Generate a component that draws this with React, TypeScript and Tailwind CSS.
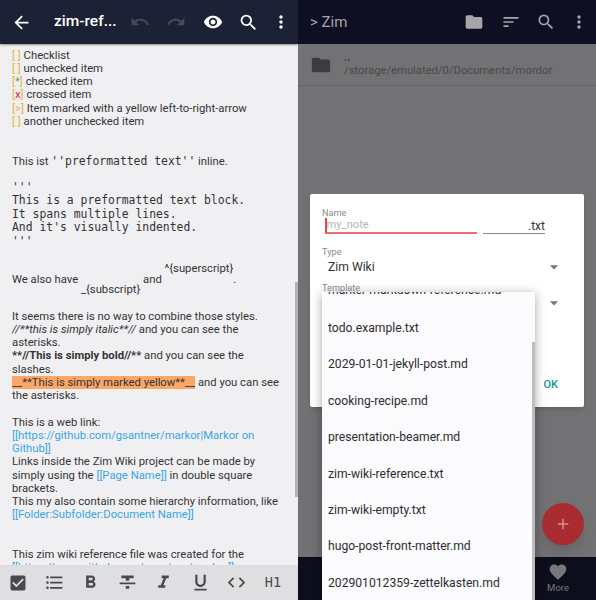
import {
  MdAdd,
  MdArrowBack,
  MdArrowDropDown,
  MdCheckBox,
  MdCode,
  MdFavorite,
  MdFolder,
  MdFormatBold,
  MdFormatItalic,
  MdFormatListBulleted,
  MdFormatStrikethrough,
  MdFormatUnderlined,
  MdMoreVert,
  MdRedo,
  MdSearch,
  MdSort,
  MdUndo,
  MdVisibility,
} from "react-icons/md";

const TEMPLATES = [
  "todo.example.txt",
  "2029-01-01-jekyll-post.md",
  "cooking-recipe.md",
  "presentation-beamer.md",
  "zim-wiki-reference.txt",
  "zim-wiki-empty.txt",
  "hugo-post-front-matter.md",
  "202901012359-zettelkasten.md",
];

const mono = "font-['DejaVu_Sans_Mono',monospace] text-[11.4px]";

function Box({ mark = " ", color = "" }: { mark?: string; color?: string }) {
  return (
    <span className="text-[#e8b23e]">
      [<span className={color}>{mark === " " ? "\u00a0" : mark}</span>]
    </span>
  );
}

function Link({ children }: { children: string }) {
  return <span className="text-[#3aa5e6]">{children}</span>;
}

function Editor() {
  return (
    <div className="flex h-[600px] w-[298px] flex-col bg-[#f0f0f2]">
      <header className="flex h-[44px] shrink-0 items-center bg-[#1d2135] text-white shadow-[0_1px_2px_rgba(0,0,0,0.4)]">
        <MdArrowBack className="ml-[11px] h-[21px] w-[21px]" />
        <span className="ml-[22px] w-[62px] whitespace-nowrap text-[15.5px] font-medium">zim-ref...</span>
        <MdUndo className="ml-[13.5px] h-[20px] w-[20px] text-[#474a5a]" />
        <MdRedo className="ml-[16.5px] h-[20px] w-[20px] text-[#474a5a]" />
        <MdVisibility className="ml-[16.5px] h-[20px] w-[20px]" />
        <MdSearch className="ml-[15.7px] h-[21px] w-[21px]" />
        <MdMoreVert className="ml-[11.8px] h-[20px] w-[20px]" />
      </header>

      <main className="relative min-h-0 flex-1 overflow-hidden pl-3 pr-[16px] pt-[4.5px] text-[11.27px] leading-[13.25px] text-[#333336]">
        <p><Box /> Checklist</p>
        <p><Box /> unchecked item</p>
        <p><Box mark="*" color="text-[#5fa83c]" /> checked item</p>
        <p><Box mark="x" color="text-[#c62828]" /> crossed item</p>
        <p><Box mark=">" /> Item marked with a yellow left-to-right-arrow</p>
        <p><Box /> another unchecked item</p>

        <p className="mt-[26.5px]">
          This ist <span className={mono}>''preformatted text''</span> inline.
        </p>

        <pre className={`${mono} mt-[13px] leading-[13.5px]`}>
          {"'''\nThis is a preformatted text block.\nIt spans multiple lines.\nAnd it's visually indented.\n'''"}
        </pre>

        <div className="mt-[14px] flex h-[34px] whitespace-pre">
          <span className="self-center">We also have </span>
          <span className="self-end">_{"{subscript}"}</span>
          <span className="self-center"> and </span>
          <span className="self-start">^{"{superscript}"}</span>
          <span className="self-center">.</span>
        </div>

        <p className="mt-[13.4px]">It seems there is no way to combine those styles.</p>
        <p><i>//**this is simply italic**//</i> and you can see the asterisks.</p>
        <p><b>**//This is simply bold//**</b> and you can see the slashes.</p>
        <p>
          <span className="bg-[#fba767]">__**This is simply marked yellow**__</span> and you can see the asterisks.
        </p>

        <p className="mt-[13.25px]">This is a web link:</p>
        <p><Link>[[https://github.com/gsantner/markor|Markor on Github]]</Link></p>
        <p>
          Links inside the Zim Wiki project can be made by simply using the <Link>[[Page Name]]</Link> in double square brackets.
        </p>
        <p>This my also contain some hierarchy information, like</p>
        <p><Link>[[Folder:Subfolder:Document Name]]</Link></p>

        <p className="mt-[26.5px]">This zim wiki reference file was created for the</p>
        <p><Link>[[https://www.github.com/gsantner/markor]]</Link></p>

        <div className="absolute right-0 top-[237.7px] h-[215px] w-[3px] bg-[#b4b4b6]" />
      </main>

      <footer className="grid h-[35px] shrink-0 grid-cols-[repeat(8,36.4px)] items-center justify-items-center bg-[#dfdfe1] text-[#4a4a4c]">
        <MdCheckBox className="h-[20px] w-[20px]" />
        <MdFormatListBulleted className="h-[21px] w-[21px]" />
        <MdFormatBold className="h-[21px] w-[21px]" />
        <MdFormatStrikethrough className="h-[21px] w-[21px]" />
        <MdFormatItalic className="h-[21px] w-[21px]" />
        <MdFormatUnderlined className="h-[21px] w-[21px]" />
        <MdCode className="h-[21px] w-[21px]" />
        <span className="font-['DejaVu_Sans_Mono',monospace] text-[13.5px] font-medium">H1</span>
      </footer>
    </div>
  );
}

function Browser() {
  return (
    <div className="relative flex h-[600px] w-[298px] flex-col overflow-hidden bg-[#727174] font-['Roboto',sans-serif]">
      <header className="flex h-[44px] shrink-0 items-center bg-[#0f0f24] text-[#a5a5aa]">
        <span className="ml-[12px] w-[150px] text-[15px]">&gt; Zim</span>
        <MdFolder className="ml-[4px] h-[20px] w-[20px]" />
        <MdSort className="ml-[16.7px] h-[20px] w-[20px]" />
        <MdSearch className="ml-[15.3px] h-[20px] w-[20px]" />
        <MdMoreVert className="ml-[13px] h-[20px] w-[20px]" />
      </header>

      <div className="flex h-[42px] items-center border-b border-[#666568] pl-[12px] text-[#3f3f42]">
        <MdFolder className="h-[22px] w-[22px] text-[#3c3c3e]" />
        <div className="ml-[12px] text-[11.25px] leading-[14px]">
          <p className="font-bold leading-[12px]">..</p>
          <p className="text-[#49494b]">/storage/emulated/0/Documents/mordor</p>
        </div>
      </div>

      <div className="min-h-0 flex-1" />

      <nav className="flex h-[43px] shrink-0 justify-end bg-[#0d0e1c] text-[#77777c]">
        <div className="mr-[27px] flex flex-col items-center pt-[5px] text-[9.5px] leading-[11px]">
          <MdFavorite className="h-[20px] w-[20px]" />
          <span>More</span>
        </div>
      </nav>

      {/* dialog */}
      <div className="absolute left-[12px] top-[194px] h-[213px] w-[274px] rounded-[2px] bg-white text-[#333336] shadow-md">
        <p className="ml-[12px] mt-[13px] text-[9.2px] leading-[12px] text-[#8b8b8e]">Name</p>
        <div className="ml-[15px] flex">
          <div className="flex h-[15px] w-[152px] items-center border-b-2 border-[#ee6e6e] text-[11.2px] text-[#b4b4b6]">
            <span className="h-[15px] w-[1.5px] bg-[#e04848]" />
            my_note
          </div>
          <div className="ml-[6px] flex h-[15px] w-[62px] items-center justify-end border-b border-[#888] text-[12px]">.txt</div>
        </div>
        <p className="ml-[12px] mt-[12px] text-[9.2px] leading-[12px] text-[#8b8b8e]">Type</p>
        <div className="ml-[18px] flex h-[18px] w-[236px] items-center justify-between text-[12.15px]">
          Zim Wiki
          <MdArrowDropDown className="h-[20px] w-[20px] text-[#77777a]" />
        </div>
        <p className="ml-[12px] mt-[6px] text-[9.2px] leading-[12px] text-[#8b8b8e]">Template</p>
        <MdArrowDropDown className="absolute right-[20px] top-[99px] h-[20px] w-[20px] text-[#77777a]" />
        <span className="absolute right-[26px] top-[183px] text-[11px] font-medium text-[#0f9a8c]">OK</span>
      </div>

      {/* template dropdown */}
      <div className="absolute left-[24px] top-[292px] h-[320px] w-[213px] overflow-hidden bg-[#fbfafc] shadow-[0_2px_10px_rgba(0,0,0,0.35)]">
        <div className="-mt-[9.5px] pl-[6px] text-[12.15px] text-[#2e2e30]">
          <p className="flex h-[16px] items-center">marker-markdown-reference.md</p>
          <div className="mt-[11.5px]">
            {TEMPLATES.map((name) => (
              <p key={name} className="flex h-[36.4px] items-center">
                {name}
              </p>
            ))}
          </div>
        </div>
        <div className="absolute right-0 top-[50px] h-[270px] w-[3px] bg-[#bdbdbf]" />
      </div>

      <button className="absolute left-[244px] top-[503px] flex h-[42px] w-[42px] items-center justify-center rounded-full bg-[#a82c30] text-[#d98c8c] shadow-lg">
        <MdAdd className="h-[18px] w-[18px]" />
      </button>
    </div>
  );
}

export default function App() {
  return (
    <div className="flex h-[600px] w-[596px] overflow-hidden font-['Roboto',sans-serif]">
      <Editor />
      <Browser />
    </div>
  );
}
